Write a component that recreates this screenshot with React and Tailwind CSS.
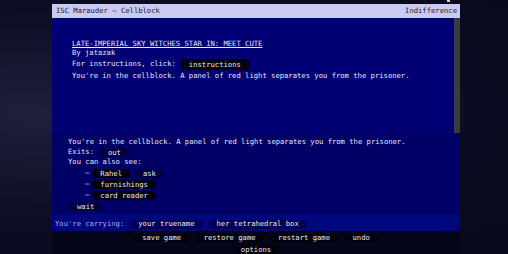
export default function App() {
  const mono = { fontFamily: '"DejaVu Sans Mono", "Liberation Mono", monospace' };

  const Pill = ({ children, tone = "black", className = "" }) => (
    <span
      className={`inline-flex items-center h-[9px] px-[8px] rounded-full leading-none ${
        tone === "black" ? "bg-[#02020c]" : tone === "navy" ? "bg-[#00003e]" : "bg-[#000052]"
      } ${className}`}
    >
      {children}
    </span>
  );

  return (
    <div
      className="w-[508px] h-[254px] overflow-hidden flex text-[7.2px] text-[#e8e8f6] bg-[radial-gradient(ellipse_at_8%_45%,#1d1f3c_0%,#0c0d24_55%,#080919_100%)]"
      style={mono}
    >
      <div className="w-[52px] shrink-0" />

      {/* Game window */}
      <div className="w-[408px] shrink-0 flex flex-col">
        <div className="h-[4px] relative">
          <span className="absolute left-[395px] top-0 w-[3px] h-[2px] bg-[#cfcfe0]" />
        </div>

        {/* Title bar */}
        <div className="h-[14px] bg-[#c9c9f1] text-[#1a1a28] flex items-center justify-between px-[4px]">
          <span>ISC Marauder – Cellblock</span>
          <span className="mr-[-1px]">Indifference</span>
        </div>

        {/* Upper story window */}
        <div className="h-[116px] bg-[#000074] flex">
          <div className="flex-1 pl-[20px] pt-[22px] flex flex-col">
            <div className="h-[9px] flex items-center underline underline-offset-[1px]">
              LATE-IMPERIAL SKY WITCHES STAR IN: MEET CUTE
            </div>
            <div className="h-[9px] flex items-center">By jatazak</div>
            <div className="h-[13px] flex items-center gap-[5px]">
              <span>For instructions, click:</span>
              <span className="inline-flex items-center h-[11px] px-[8px] rounded-[4px] bg-[#02020a] leading-none">
                instructions
              </span>
            </div>
            <div className="h-[11px] flex items-center">
              You're in the cellblock. A panel of red light separates you from the prisoner.
            </div>
          </div>
          <div className="w-[6px] bg-[#3b3b3f]" />
        </div>

        {/* Lower story window */}
        <div className="h-[82px] bg-[#000066] pl-[16px] pt-[5px] flex flex-col">
          <div className="h-[10px] flex items-center">
            You're in the cellblock. A panel of red light separates you from the prisoner.
          </div>
          <div className="h-[10px] flex items-center gap-[6px]">
            <span>Exits:</span>
            <Pill tone="navy">out</Pill>
          </div>
          <div className="h-[10px] flex items-center">You can also see:</div>
          <div className="h-[11px] flex items-center pl-[17px] gap-[3px]">
            <span>–</span>
            <Pill>Rahel</Pill>
            <Pill tone="navy" className="ml-[2px]">ask</Pill>
          </div>
          <div className="h-[11px] flex items-center pl-[17px] gap-[3px]">
            <span>–</span>
            <Pill>furnishings</Pill>
          </div>
          <div className="h-[11px] flex items-center pl-[17px] gap-[3px]">
            <span>–</span>
            <Pill>card reader</Pill>
          </div>
          <div className="h-[11px] flex items-center">
            <Pill tone="navy" className="ml-[1px]">wait</Pill>
          </div>
        </div>

        {/* Inventory */}
        <div className="h-[17px] bg-[#00067c] pl-[3px] pt-[3px] flex items-center gap-[6px]">
          <span className="text-[#a9abec]">You're carrying:</span>
          <Pill tone="deep">your truename</Pill>
          <Pill tone="deep">her tetrahedral box</Pill>
        </div>

        {/* Commands */}
        <div className="flex-1 bg-[#05051a] pt-[2px] flex flex-col items-center gap-[3px]">
          <div className="flex gap-[6.5px]">
            <Pill>save game</Pill>
            <Pill>restore game</Pill>
            <Pill>restart game</Pill>
            <Pill>undo</Pill>
          </div>
          <div className="flex">
            <Pill>options</Pill>
          </div>
        </div>
      </div>

      <div className="flex-1" />
    </div>
  );
}
